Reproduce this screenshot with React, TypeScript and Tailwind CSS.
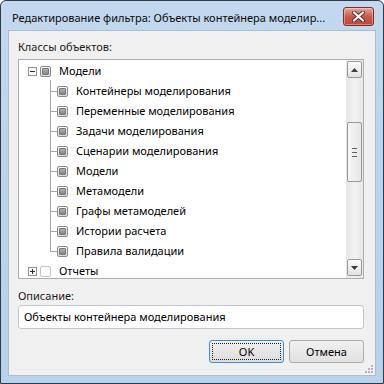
import React from "react";

const font = { fontFamily: '"Noto Sans", "Liberation Sans", sans-serif' };

function Check({ empty }: { empty?: boolean }) {
  if (empty) {
    return (
      <div className="w-[11px] h-[11px] rounded-[2px] border border-[#c4c4c4] bg-white shrink-0" />
    );
  }
  return (
    <div className="w-[11px] h-[11px] rounded-[2px] border border-[#8c8c8c] bg-gradient-to-b from-[#f4f4f4] to-[#dcdcdc] shrink-0 flex items-center justify-center">
      <div className="w-[7px] h-[7px] rounded-[1px] border border-[#787878] bg-gradient-to-b from-[#b0b0b0] to-[#868686]" />
    </div>
  );
}

function Expander({ plus }: { plus?: boolean }) {
  return (
    <div className="w-[9px] h-[9px] border border-[#919191] bg-white shrink-0 relative">
      <div className="absolute left-[1px] top-[3px] w-[5px] h-[1px] bg-[#2b2b2b]" />
      {plus && <div className="absolute left-[3px] top-[1px] w-[1px] h-[5px] bg-[#2b2b2b]" />}
    </div>
  );
}

const children = [
  "Контейнеры моделирования",
  "Переменные моделирования",
  "Задачи моделирования",
  "Сценарии моделирования",
  "Модели",
  "Метамодели",
  "Графы метамоделей",
  "Истории расчета",
  "Правила валидации",
];

function ScrollBtn({ down }: { down?: boolean }) {
  return (
    <div className="h-[17px] mx-[1px] rounded-[2px] border border-[#9a9a9a] bg-gradient-to-b from-[#fbfbfb] to-[#e2e2e2] flex items-center justify-center">
      <svg width="7" height="4" viewBox="0 0 7 4">
        {down ? (
          <polygon points="0,0 7,0 3.5,4" fill="#3d3d3d" />
        ) : (
          <polygon points="0,4 7,4 3.5,0" fill="#3d3d3d" />
        )}
      </svg>
    </div>
  );
}

export default function App() {
  return (
    <div className="w-[384px] h-[384px] bg-white text-[11px] text-black" style={font}>
      <div className="w-[384px] h-[384px] flex flex-col rounded-t-[6px] border border-[#2f3a47] bg-gradient-to-b from-[#c2d8ee] via-[#bcd3ec] to-[#b9d1ea]">
        <div className="h-[29px] flex items-start shrink-0">
          <div className="pl-[11px] pt-[9px] text-[11px] leading-[16px] flex-1 whitespace-nowrap text-[#0a0a0a]">
            Редактирование фильтра: Объекты контейнера моделир...
          </div>
          <div className="mt-[6px] mr-[9px] shrink-0 w-[31px] h-[19px] rounded-[3px] border border-[#76302a] bg-gradient-to-b from-[#e7a89d] via-[#c95a4c] to-[#c0463a] flex items-center justify-center shadow-[inset_0_0_0_1px_rgba(255,255,255,0.35)]">
            <svg width="13" height="11" viewBox="0 0 13 11">
              <path d="M2 1.5 L11 9.5 M11 1.5 L2 9.5" stroke="#5b2c28" strokeWidth="4" strokeLinecap="round" />
              <path d="M2 1.5 L11 9.5 M11 1.5 L2 9.5" stroke="#ffffff" strokeWidth="2.2" strokeLinecap="round" />
            </svg>
          </div>
        </div>
        <div className="mx-[7px] mb-[7px] flex-1 bg-[#f0f0f0] border border-[#a9bdd4] flex flex-col pl-[9px] pr-[11px] relative">
          <div className="pt-[8px] leading-[16px] text-[#1a1a1a]">Классы объектов:</div>
          <div className="mt-[4px] h-[220px] border border-[#acaeb3] bg-white flex">
            <div className="flex-1 overflow-hidden pt-[1px] relative">
              <div className="absolute left-[31px] top-[20px] w-[1px] h-[171px] bg-[#a5a5a5]" />
              <div className="h-[20px] flex items-center pl-[9px]">
                <Expander />
                <div className="w-[3px]" />
                <Check />
                <div className="ml-[8px] whitespace-nowrap leading-[16px]">Модели</div>
              </div>
              {children.map((c) => (
                <div key={c} className="h-[20px] flex items-center pl-[31px]">
                  <div className="w-[7px] h-[1px] bg-[#a5a5a5]" />
                  <Check />
                  <div className="ml-[8px] whitespace-nowrap leading-[16px]">{c}</div>
                </div>
              ))}
              <div className="h-[20px] flex items-center pl-[9px]">
                <Expander plus />
                <div className="w-[3px]" />
                <Check empty />
                <div className="ml-[8px] whitespace-nowrap leading-[16px]">Отчеты</div>
              </div>
            </div>
            <div className="w-[17px] flex flex-col bg-gradient-to-r from-[#e6e6e6] via-[#f2f2f2] to-[#e6e6e6] pt-[1px] pb-[2px]">
              <ScrollBtn />
              <div className="h-[44px]" />
              <div className="h-[60px] mx-[1px] rounded-[2px] border border-[#9a9a9a] bg-gradient-to-r from-[#f6f6f6] to-[#e6e6e6] flex flex-col items-center justify-center gap-[3px]">
                <div className="w-[5px] h-[1px] bg-[#606060]" />
                <div className="w-[5px] h-[1px] bg-[#606060]" />
                <div className="w-[5px] h-[1px] bg-[#606060]" />
              </div>
              <div className="flex-1" />
              <ScrollBtn down />
            </div>
          </div>
          <div className="mt-[9px] leading-[16px] text-[#1a1a1a]">Описание:</div>
          <div className="mt-[1px] h-[24px] rounded-[3px] border border-[#c3c6cc] bg-white flex items-center pl-[5px] leading-[16px]">
            Объекты контейнера моделирования
          </div>
          <div className="mt-[11px] flex justify-end gap-[5px]">
            <div className="w-[75px] h-[23px] rounded-[3px] border border-[#3d8fd1] bg-gradient-to-b from-[#f0f0f0] to-[#dcdcdc] p-[2px]">
              <div className="w-full h-full border border-dotted border-[#222] flex items-center justify-center leading-[16px]">
                OK
              </div>
            </div>
            <div className="w-[75px] h-[23px] rounded-[3px] border border-[#acacac] bg-gradient-to-b from-[#f0f0f0] to-[#e1e1e1] flex items-center justify-center leading-[16px]">
              Отмена
            </div>
          </div>
          <svg className="absolute right-[2px] bottom-[2px]" width="8" height="8" viewBox="0 0 8 8">
            {[
              [6, 0],
              [3, 3],
              [6, 3],
              [0, 6],
              [3, 6],
              [6, 6],
            ].map(([x, y], i) => (
              <rect key={i} x={x} y={y} width="2" height="2" fill="#b5b5b5" />
            ))}
          </svg>
        </div>
      </div>
    </div>
  );
}
